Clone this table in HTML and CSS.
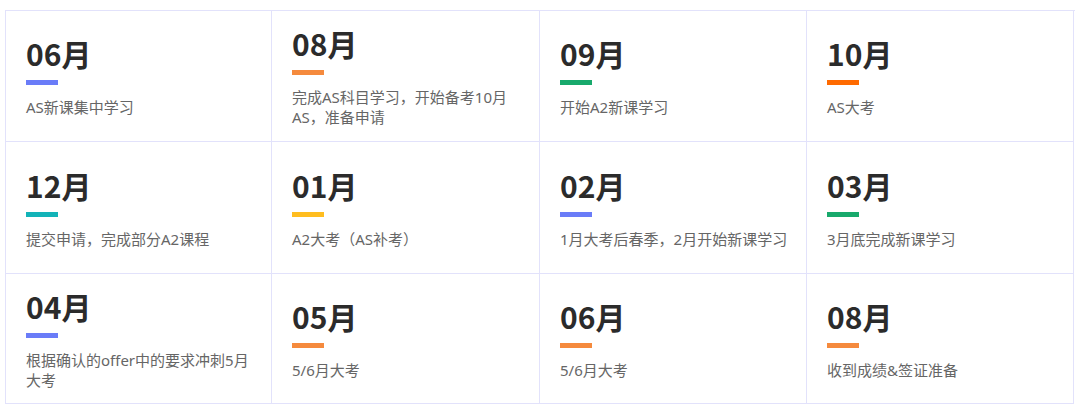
FILE: index.html
```html
<!DOCTYPE html>
<html lang="zh-CN">
<head>
<meta charset="utf-8">
<title>时间规划</title>
<link rel="stylesheet" href="styles.css">
</head>
<body>
<div class="timeline">
  <div class="cell"><div class="month">06月</div><div class="bar blue"></div><div class="desc">AS新课集中学习</div></div>
  <div class="cell"><div class="month">08月</div><div class="bar orange"></div><div class="desc">完成AS科目学习，开始备考10月AS，准备申请</div></div>
  <div class="cell"><div class="month">09月</div><div class="bar green"></div><div class="desc">开始A2新课学习</div></div>
  <div class="cell"><div class="month">10月</div><div class="bar red"></div><div class="desc">AS大考</div></div>

  <div class="cell"><div class="month">12月</div><div class="bar teal"></div><div class="desc">提交申请，完成部分A2课程</div></div>
  <div class="cell"><div class="month">01月</div><div class="bar yellow"></div><div class="desc">A2大考（AS补考）</div></div>
  <div class="cell"><div class="month">02月</div><div class="bar blue"></div><div class="desc">1月大考后春季，2月开始新课学习</div></div>
  <div class="cell"><div class="month">03月</div><div class="bar green"></div><div class="desc">3月底完成新课学习</div></div>

  <div class="cell"><div class="month">04月</div><div class="bar blue"></div><div class="desc">根据确认的offer中的要求冲刺5月大考</div></div>
  <div class="cell"><div class="month">05月</div><div class="bar orange"></div><div class="desc">5/6月大考</div></div>
  <div class="cell"><div class="month">06月</div><div class="bar orange"></div><div class="desc">5/6月大考</div></div>
  <div class="cell"><div class="month">08月</div><div class="bar orange"></div><div class="desc">收到成绩&amp;签证准备</div></div>
</div>
</body>
</html>
```

FILE: styles.css
```css
html, body {
  margin: 0;
  padding: 0;
  background: #ffffff;
}

body {
  font-family: "Noto Sans CJK SC", "Liberation Sans", sans-serif;
  padding: 10px 0 0 5px;
}

.timeline {
  display: grid;
  grid-template-columns: 266px 268px 267px 267px;
  grid-template-rows: 131px 132px 130px;
  width: 1069px;
  border-top: 1px solid #e2e2fb;
  border-left: 1px solid #e2e2fb;
}

.cell {
  display: flex;
  flex-direction: column;
  justify-content: center;
  padding: 0 15px 0 20px;
  border-right: 1px solid #e2e2fb;
  border-bottom: 1px solid #e2e2fb;
}

.month {
  font-size: 30px;
  font-weight: 700;
  line-height: 36px;
  color: #2b2b2b;
}

.bar {
  width: 32px;
  height: 5px;
  margin-top: 9px;
}

.desc {
  margin-top: 12px;
  font-family: "Noto Sans", "Noto Sans CJK SC", sans-serif;
  font-size: 15px;
  line-height: 20px;
  color: #666666;
}

.blue { background: #6a7cf8; }
.orange { background: #f58a3d; }
.green { background: #18a96c; }
.red { background: #ff6a00; }
.teal { background: #13b3b8; }
.yellow { background: #ffbd1f; }
```
